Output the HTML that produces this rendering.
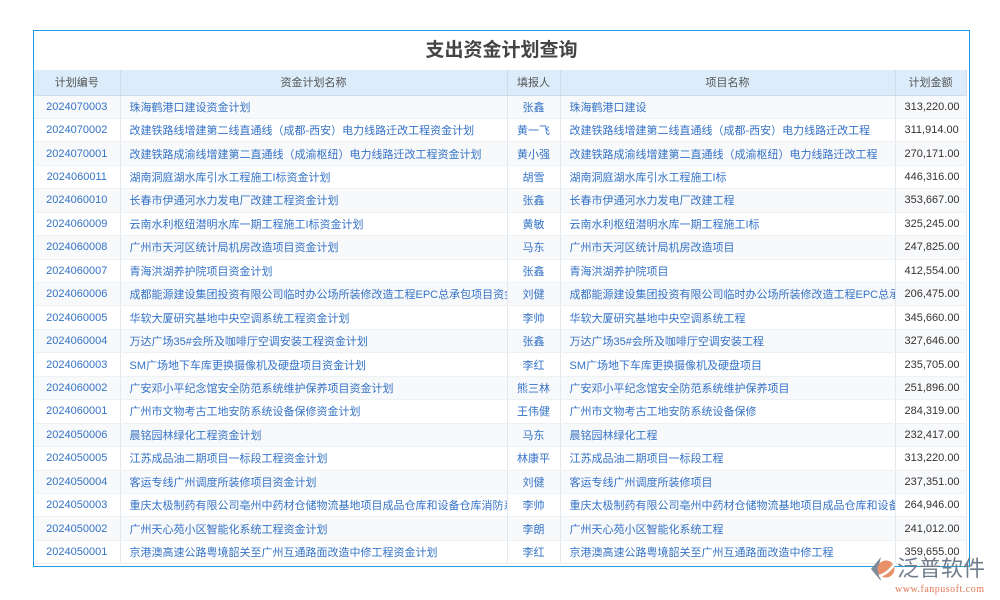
<!DOCTYPE html>
<html><head><meta charset="utf-8">
<style>
*{margin:0;padding:0;box-sizing:border-box}
body{width:1000px;height:600px;background:#fff;font-family:"Liberation Sans","Noto Sans CJK SC",sans-serif;position:relative;overflow:hidden}
.frame{position:absolute;left:33px;top:30px;width:937px;height:537px;border:1px solid #1aa0e0;overflow:hidden;background:#fff}
.title{height:39px;line-height:40px;text-align:center;font-size:19px;font-weight:bold;color:#444}
table{border-collapse:collapse;table-layout:fixed;width:932px;font-size:11px}
th{background:#dcecfa;color:#555;font-weight:normal;height:25px;border-right:1px solid #cfdce8;border-bottom:1px solid #cfdce8}
td{height:23.45px;color:#3473c6;border-right:1px solid #e3e8ee;border-bottom:1px solid #eef1f4;white-space:nowrap;overflow:hidden;padding:0 9px}
tr:nth-child(even) td{background:#f8f9fb}
td.c{text-align:center;padding:0}
td.r{text-align:right;color:#333}
.logo{position:absolute;left:868px;top:552px;width:132px;height:48px}
</style></head><body>
<div class="frame">
<div class="title">支出资金计划查询</div>
<table>
<colgroup><col style="width:86px"><col style="width:387px"><col style="width:53px"><col style="width:335px"><col style="width:71px"></colgroup>
<tr><th>计划编号</th><th>资金计划名称</th><th>填报人</th><th>项目名称</th><th>计划金额</th></tr>
<tr><td class="c">2024070003</td><td>珠海鹤港口建设资金计划</td><td class="c">张鑫</td><td>珠海鹤港口建设</td><td class="r">313,220.00</td></tr>
<tr><td class="c">2024070002</td><td>改建铁路线增建第二线直通线（成都-西安）电力线路迁改工程资金计划</td><td class="c">黄一飞</td><td>改建铁路线增建第二线直通线（成都-西安）电力线路迁改工程</td><td class="r">311,914.00</td></tr>
<tr><td class="c">2024070001</td><td>改建铁路成渝线增建第二直通线（成渝枢纽）电力线路迁改工程资金计划</td><td class="c">黄小强</td><td>改建铁路成渝线增建第二直通线（成渝枢纽）电力线路迁改工程</td><td class="r">270,171.00</td></tr>
<tr><td class="c">2024060011</td><td>湖南洞庭湖水库引水工程施工I标资金计划</td><td class="c">胡雪</td><td>湖南洞庭湖水库引水工程施工I标</td><td class="r">446,316.00</td></tr>
<tr><td class="c">2024060010</td><td>长春市伊通河水力发电厂改建工程资金计划</td><td class="c">张鑫</td><td>长春市伊通河水力发电厂改建工程</td><td class="r">353,667.00</td></tr>
<tr><td class="c">2024060009</td><td>云南水利枢纽潜明水库一期工程施工I标资金计划</td><td class="c">黄敏</td><td>云南水利枢纽潜明水库一期工程施工I标</td><td class="r">325,245.00</td></tr>
<tr><td class="c">2024060008</td><td>广州市天河区统计局机房改造项目资金计划</td><td class="c">马东</td><td>广州市天河区统计局机房改造项目</td><td class="r">247,825.00</td></tr>
<tr><td class="c">2024060007</td><td>青海洪湖养护院项目资金计划</td><td class="c">张鑫</td><td>青海洪湖养护院项目</td><td class="r">412,554.00</td></tr>
<tr><td class="c">2024060006</td><td>成都能源建设集团投资有限公司临时办公场所装修改造工程EPC总承包项目资金计划</td><td class="c">刘健</td><td>成都能源建设集团投资有限公司临时办公场所装修改造工程EPC总承包项目</td><td class="r">206,475.00</td></tr>
<tr><td class="c">2024060005</td><td>华软大厦研究基地中央空调系统工程资金计划</td><td class="c">李帅</td><td>华软大厦研究基地中央空调系统工程</td><td class="r">345,660.00</td></tr>
<tr><td class="c">2024060004</td><td>万达广场35#会所及咖啡厅空调安装工程资金计划</td><td class="c">张鑫</td><td>万达广场35#会所及咖啡厅空调安装工程</td><td class="r">327,646.00</td></tr>
<tr><td class="c">2024060003</td><td>SM广场地下车库更换摄像机及硬盘项目资金计划</td><td class="c">李红</td><td>SM广场地下车库更换摄像机及硬盘项目</td><td class="r">235,705.00</td></tr>
<tr><td class="c">2024060002</td><td>广安邓小平纪念馆安全防范系统维护保养项目资金计划</td><td class="c">熊三林</td><td>广安邓小平纪念馆安全防范系统维护保养项目</td><td class="r">251,896.00</td></tr>
<tr><td class="c">2024060001</td><td>广州市文物考古工地安防系统设备保修资金计划</td><td class="c">王伟健</td><td>广州市文物考古工地安防系统设备保修</td><td class="r">284,319.00</td></tr>
<tr><td class="c">2024050006</td><td>晨铭园林绿化工程资金计划</td><td class="c">马东</td><td>晨铭园林绿化工程</td><td class="r">232,417.00</td></tr>
<tr><td class="c">2024050005</td><td>江苏成品油二期项目一标段工程资金计划</td><td class="c">林康平</td><td>江苏成品油二期项目一标段工程</td><td class="r">313,220.00</td></tr>
<tr><td class="c">2024050004</td><td>客运专线广州调度所装修项目资金计划</td><td class="c">刘健</td><td>客运专线广州调度所装修项目</td><td class="r">237,351.00</td></tr>
<tr><td class="c">2024050003</td><td>重庆太极制药有限公司亳州中药材仓储物流基地项目成品仓库和设备仓库消防系统资金计划</td><td class="c">李帅</td><td>重庆太极制药有限公司亳州中药材仓储物流基地项目成品仓库和设备仓库</td><td class="r">264,946.00</td></tr>
<tr><td class="c">2024050002</td><td>广州天心苑小区智能化系统工程资金计划</td><td class="c">李朗</td><td>广州天心苑小区智能化系统工程</td><td class="r">241,012.00</td></tr>
<tr><td class="c">2024050001</td><td>京港澳高速公路粤境韶关至广州互通路面改造中修工程资金计划</td><td class="c">李红</td><td>京港澳高速公路粤境韶关至广州互通路面改造中修工程</td><td class="r">359,655.00</td></tr>
</table>
</div>
<div class="logo">
<svg width="28" height="26" style="position:absolute;left:2px;top:4px" viewBox="0 0 28 26">
<path d="M11 1 L1 13 L11 25 L8 13 Z" fill="#7d8a99"/>
<circle cx="16" cy="13" r="8.5" fill="#e8906a"/>
<path d="M9 20 Q18 18 26 6" stroke="#fff" stroke-width="2.5" fill="none"/>
</svg>
<div style="position:absolute;left:29px;top:1px;font-size:22px;line-height:28px;color:#6f7c8c;white-space:nowrap;font-family:'Noto Sans CJK SC',sans-serif">泛普软件</div>
<div style="position:absolute;left:27px;top:32px;font-size:10px;color:#e07a55;white-space:nowrap;font-family:'Liberation Serif',serif;letter-spacing:0.5px">www.fanpusoft.com</div>
</div>
</body></html>
